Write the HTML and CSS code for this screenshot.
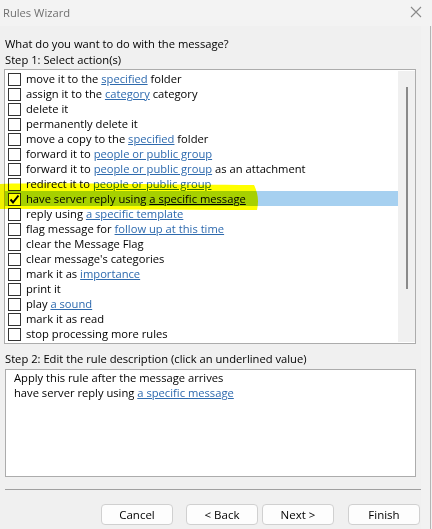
FILE: index.html
```html
<!DOCTYPE html>
<html>

<head>
  <title>Rules Wizard</title>
  <link rel="stylesheet" href="styles.css">
</head>

<body>
  <div class="window">
    <div class="titlebar">
      <span class="title">Rules Wizard</span>
      <svg class="close" width="12" height="12" viewBox="0 0 12 12">
        <path d="M1 1 L11 11 M11 1 L1 11" stroke="#8a8a8a" stroke-width="1.1" fill="none" />
      </svg>
    </div>

    <div class="frame">
      <div class="dialog">
        <p class="prompt">What do you want to do with the message?</p>
        <p class="prompt">Step 1: Select action(s)</p>

        <div class="listbox">
          <ul class="actions">
            <li><span class="check"></span>move it to the <a href="#">specified</a> folder</li>
            <li><span class="check"></span>assign it to the <a href="#">category</a> category</li>
            <li><span class="check"></span>delete it</li>
            <li><span class="check"></span>permanently delete it</li>
            <li><span class="check"></span>move a copy to the <a href="#">specified</a> folder</li>
            <li><span class="check"></span>forward it to <a href="#">people or public group</a></li>
            <li><span class="check"></span>forward it to <a href="#">people or public group</a> as an attachment</li>
            <li><span class="check"></span>redirect it to <a href="#">people or public group</a></li>
            <li class="selected"><span class="check checked"><svg width="11" height="11" viewBox="0 0 11 11"><path d="M1.5 5.5 L4 8.5 L9.5 1.5" stroke="#000" stroke-width="2" fill="none" /></svg></span>have server reply using <a href="#">a specific message</a></li>
            <li><span class="check"></span>reply using <a href="#">a specific template</a></li>
            <li><span class="check"></span>flag message for <a href="#">follow up at this time</a></li>
            <li><span class="check"></span>clear the Message Flag</li>
            <li><span class="check"></span>clear message's categories</li>
            <li><span class="check"></span>mark it as <a href="#">importance</a></li>
            <li><span class="check"></span>print it</li>
            <li><span class="check"></span>play <a href="#">a sound</a></li>
            <li><span class="check"></span>mark it as read</li>
            <li><span class="check"></span>stop processing more rules</li>
          </ul>
          <div class="scrollbar">
            <div class="thumb"></div>
          </div>
          <!-- highlighter stroke drawn over the selected row -->
          <svg class="marker" width="265" height="32" viewBox="0 0 265 32">
            <path d="M0 3 C60 1 150 4 254 4 C258 12 259 20 257 29 C170 29 80 28 0 28 Z" fill="#ffff00" />
          </svg>
        </div>

        <p class="prompt step2">Step 2: Edit the rule description (click an underlined value)</p>
        <div class="description">
          <p>Apply this rule after the message arrives</p>
          <p>have server reply using <a href="#">a specific message</a></p>
        </div>

        <div class="footer">
          <button class="cancel">Cancel</button>
          <button class="back">&lt; Back</button>
          <button class="next">Next &gt;</button>
          <button class="finish">Finish</button>
        </div>
      </div>
      <div class="edge"></div>
    </div>
  </div>
</body>

</html>
```

FILE: styles.css
```css
* {
  margin: 0;
  padding: 0;
  box-sizing: border-box;
}

body {
  font-family: 'Open Sans', 'Noto Sans', sans-serif;
  font-size: 11.2px;
  color: #000;
  background-color: #f0f0f0;
  overflow: hidden;
}

.window {
  width: 432px;
  height: 529px;
  display: flex;
  flex-direction: column;
}

.titlebar {
  height: 26px;
  background-color: #f3f3f3;
  display: flex;
  align-items: center;
  justify-content: space-between;
  padding: 0 10px 2px 3px;
}

.title {
  color: #707070;
}

.frame {
  flex: 1;
  display: flex;
}

.dialog {
  width: 421px;
  padding: 10px 0 0 4px;
  background-color: #f0f0f0;
}

.edge {
  flex: 1;
  background-color: #f2f2f2;
  border-right: 1px solid #b4b4b4;
  margin-right: 1px;
}

.prompt {
  padding-left: 1px;
  line-height: 16px;
}

.listbox {
  position: relative;
  width: 412px;
  height: 275px;
  margin-top: 1px;
  border: 1px solid #acacac;
  background-color: #fff;
  display: flex;
  padding: 1px 0 0 0;
}

.actions {
  list-style: none;
  flex: 1;
}

.actions li {
  height: 15px;
  line-height: 15px;
  white-space: nowrap;
  padding-left: 3px;
}

.actions li.selected {
  background-color: #a6d0f0;
}

.actions li.selected a {
  color: #000;
}

.check {
  display: inline-block;
  width: 13px;
  height: 13px;
  border: 1px solid #333;
  background-color: #fff;
  margin-right: 5px;
  vertical-align: -3px;
  position: relative;
}

.check svg {
  position: absolute;
  left: 0;
  top: 0;
}

a {
  color: #2e6aae;
  text-decoration: underline;
}

.scrollbar {
  width: 17px;
  margin: 0 0 1px 0;
  background-color: #f0f0f0;
  display: flex;
  justify-content: center;
  padding-top: 16px;
}

.thumb {
  width: 2px;
  height: 202px;
  background-color: #8a8a8a;
}

.marker {
  position: absolute;
  left: -5px;
  top: 111px;
  mix-blend-mode: multiply;
  pointer-events: none;
}

.step2 {
  margin-top: 7px;
}

.description {
  width: 411px;
  height: 108px;
  margin: 2px 0 0 1px;
  border: 1px solid #acacac;
  background-color: #fff;
  padding: 0 8px;
  line-height: 15px;
}

.footer {
  width: 416px;
  margin: 12px 0 0 1px;
  border-top: 1px solid #a0a0a0;
  padding-top: 14px;
  display: flex;
  justify-content: flex-end;
}

.footer button {
  font-family: inherit;
  font-size: 11.5px;
  color: #000;
  width: 72px;
  height: 21px;
  background-color: #fdfdfd;
  border: 1px solid #d0d0d0;
  border-radius: 4px;
}

.footer .back {
  margin-left: 13px;
}

.footer .next {
  margin-left: 4px;
}

.footer .finish {
  margin: 0 1px 0 14px;
}
```
